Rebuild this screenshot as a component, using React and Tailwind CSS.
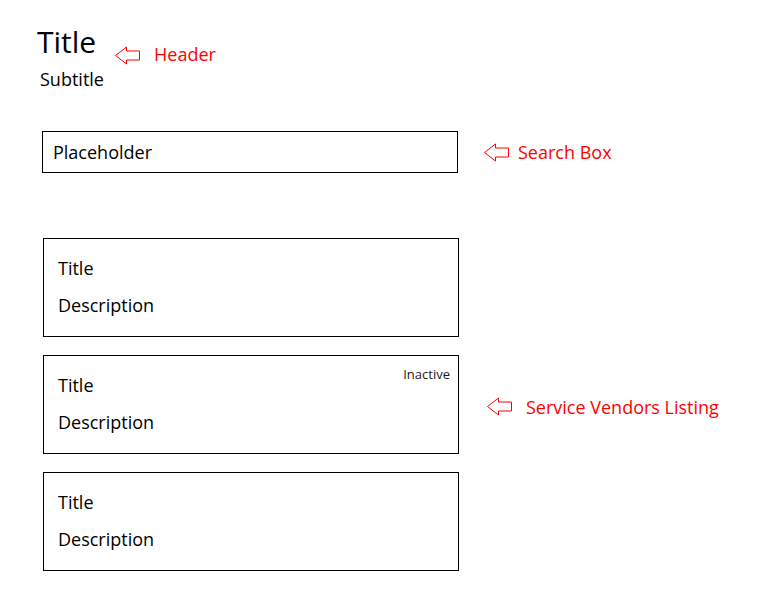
function Arrow({ className = "" }) {
  return (
    <svg className={`shrink-0 ${className}`} width="25" height="19" viewBox="0 0 25 19" fill="none">
      <polygon
        points="0.5,9.5 11.5,1 11.5,5 24.5,5 24.5,14 11.5,14 11.5,18"
        stroke="#ff0000"
        strokeWidth="1"
      />
    </svg>
  );
}

function VendorCard({ title, description, status }) {
  return (
    <div className="relative flex h-[99px] w-[416px] flex-col border border-black pl-[14px] pt-[17px]">
      {status && (
        <span className="absolute right-[8px] top-[10px] text-[13px] font-medium leading-[16px] text-[#1a1a1a]">
          {status}
        </span>
      )}
      <span className="text-[18px] leading-[24px]">{title}</span>
      <span className="mt-[13px] text-[18px] leading-[24px]">{description}</span>
    </div>
  );
}

const vendors = [
  { id: 1, title: "Title", description: "Description" },
  { id: 2, title: "Title", description: "Description", status: "Inactive" },
  { id: 3, title: "Title", description: "Description" },
];

export default function App() {
  return (
    <div className="min-h-screen bg-white font-['Open_Sans',sans-serif] text-black">
      <div className="pl-[37px] pt-[24px]">
        {/* Header */}
        <header>
          <div className="flex items-start">
            <h1 className="w-[78px] text-[30px] leading-[36px]">Title</h1>
            <Arrow className="mt-[22px]" />
            <span className="ml-[14px] mt-[18px] text-[18px] leading-[24px] text-[#ff0000]">Header</span>
          </div>
          <p className="ml-[3px] mt-[1px] text-[18px] leading-[24px]">Subtitle</p>
        </header>

        {/* Search box */}
        <div className="ml-[5px] mt-[40px] flex items-center">
          <input
            type="text"
            placeholder="Placeholder"
            className="h-[42px] w-[416px] border border-black px-[10px] text-[18px] leading-[24px] outline-none placeholder:text-black"
          />
          <Arrow className="ml-[26px]" />
          <span className="ml-[9px] -mt-[1px] text-[18px] leading-[24px] text-[#ff0000]">Search Box</span>
        </div>

        {/* Service vendors listing */}
        <div className="ml-[6px] mt-[65px] flex items-center">
          <div className="flex flex-col gap-[18px]">
            {vendors.map((v) => (
              <VendorCard key={v.id} {...v} />
            ))}
          </div>
          <div className="mt-[4px] flex items-center">
            <Arrow className="ml-[28px]" />
            <span className="ml-[14px] text-[18px] leading-[24px] text-[#ff0000]">Service Vendors Listing</span>
          </div>
        </div>
      </div>
    </div>
  );
}
